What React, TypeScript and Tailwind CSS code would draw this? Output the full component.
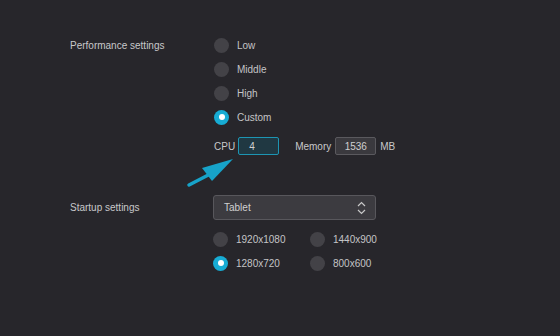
import React from "react";

function Radio({ checked, label }: { checked?: boolean; label: string }) {
  return (
    <div className="flex items-center h-[24px]">
      {checked ? (
        <div className="w-[15px] h-[15px] rounded-full bg-[#17acd4] flex items-center justify-center">
          <div className="w-[6px] h-[6px] rounded-full bg-white" />
        </div>
      ) : (
        <div className="w-[15px] h-[15px] rounded-full bg-[#434247]" />
      )}
      <span className="ml-[8px] text-[#c4c4c6]">{label}</span>
    </div>
  );
}

export default function App() {
  return (
    <div
      className="w-[560px] h-[336px] bg-[#27262b] text-[10px] text-[#c8c8ca] overflow-hidden relative"
      style={{ fontFamily: '"Liberation Sans", sans-serif' }}
    >
      <div className="pl-[70px] pt-[33px] flex">
        <div className="w-[144px] h-[24px] flex items-center">Performance settings</div>
        <div className="flex flex-col">
          <Radio label="Low" />
          <Radio label="Middle" />
          <Radio label="High" />
          <Radio checked label="Custom" />
          <div className="flex items-center h-[18px] mt-[8px]">
            <span className="mr-[3px]">CPU</span>
            <div className="w-[41px] h-[18px] border border-[#1d95b3] bg-[#203842] rounded-[2px] flex items-center pl-[10px] text-[#d0d0d0]">
              4
            </div>
            <span className="ml-[16px] mr-[4px]">Memory</span>
            <div className="w-[41px] h-[18px] border border-[#5a595e] bg-[#3a393e] rounded-[2px] flex items-center justify-center text-[#d0d0d0]">
              1536
            </div>
            <span className="ml-[4px]">MB</span>
          </div>
        </div>
      </div>
      <div className="pl-[70px] pt-[40px] flex">
        <div className="w-[143px] h-[25px] flex items-center">Startup settings</div>
        <div className="flex flex-col">
          <div className="w-[163px] h-[25px] bg-[#3c3b40] border border-[#58575c] rounded-[3px] flex items-center justify-between pl-[10px] pr-[9px] text-[#d0d0d0]">
            <span>Tablet</span>
            <svg width="9" height="14" viewBox="0 0 9 14" fill="none" stroke="#c8c8c8" strokeWidth="1.2">
              <path d="M1 5 L4.5 1.5 L8 5" />
              <path d="M1 9 L4.5 12.5 L8 9" />
            </svg>
          </div>
          <div className="grid grid-cols-[97px_auto] mt-[7px]">
            <Radio label="1920x1080" />
            <Radio label="1440x900" />
            <Radio checked label="1280x720" />
            <Radio label="800x600" />
          </div>
        </div>
      </div>
      <svg className="absolute left-[186px] top-[157px]" width="50" height="32" viewBox="0 0 50 32">
        <path d="M3 28 L30 14" stroke="#17a3c9" strokeWidth="3.5" strokeLinecap="round" />
        <path d="M47 2 L16 11 L26 24 Z" fill="#17a3c9" />
      </svg>
    </div>
  );
}
